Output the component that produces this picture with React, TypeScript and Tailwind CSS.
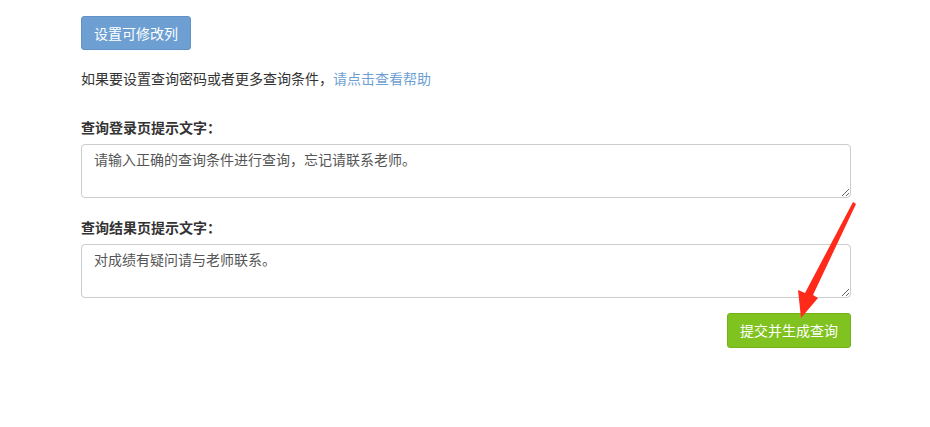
export default function App() {
  return (
    <div className="relative w-[930px] h-[427px] bg-white text-[14px] text-[#333] font-['Microsoft_YaHei','Noto_Sans_CJK_SC',sans-serif]">
      <div className="pl-[81px] pt-[16px] w-[851px]">
        <button className="h-[34px] px-3 rounded-[3px] bg-[#6d9fd3] border border-[#6393c6] text-white text-[14px]">
          设置可修改列
        </button>
        <p className="mt-[18px] leading-[20px]">
          如果要设置查询密码或者更多查询条件，
          <span className="text-[#6d9fd3]">请点击查看帮助</span>
        </p>

        <div className="mt-[29px]">
          <label className="block font-bold leading-[20px]">查询登录页提示文字：</label>
          <textarea
            className="mt-[7px] block w-full h-[54px] rounded-[4px] border border-[#ccc] px-3 py-[4px] leading-[20px] text-[#555] outline-none"
            defaultValue="请输入正确的查询条件进行查询，忘记请联系老师。"
          />
        </div>

        <div className="mt-[19px]">
          <label className="block font-bold leading-[20px]">查询结果页提示文字：</label>
          <textarea
            className="mt-[7px] block w-full h-[54px] rounded-[4px] border border-[#ccc] px-3 py-[4px] leading-[20px] text-[#555] outline-none"
            defaultValue="对成绩有疑问请与老师联系。"
          />
        </div>

        <div className="mt-[15px] flex justify-end">
          <button className="h-[35px] px-3 rounded-[3px] bg-[#80c21f] border border-[#74b318] text-white text-[14px]">
            提交并生成查询
          </button>
        </div>
      </div>

      {/* annotation arrow */}
      <svg className="absolute left-0 top-0 pointer-events-none" width="930" height="427">
        <polygon
          points="853,202 856,204 813,295 818,298 801,318 798,290 805,293"
          fill="#ff2a1a"
        />
      </svg>
    </div>
  );
}
